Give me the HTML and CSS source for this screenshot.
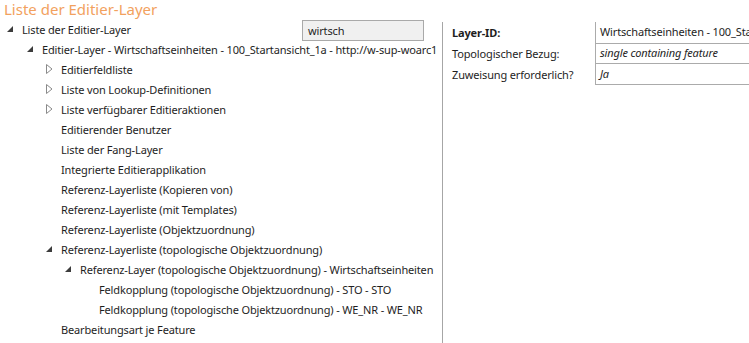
FILE: index.html
```html
<!DOCTYPE html>
<html lang="de">
<head>
    <meta charset="UTF-8">
    <title>Liste der Editier-Layer</title>
    <link rel="stylesheet" href="styles.css">
</head>
<body>
    <h1 class="title">Liste der Editier-Layer</h1>
    <div class="main">
        <div class="tree-panel">
            <div class="row lvl0 first-row">
                <span class="toggle"><svg width="6" height="6" viewBox="0 0 6 6"><polygon points="6,0 6,6 0,6" fill="#3c3c3c"/></svg></span>
                <span class="label">Liste der Editier-Layer</span>
                <div class="search">wirtsch</div>
            </div>
            <div class="row lvl1">
                <span class="toggle"><svg width="6" height="6" viewBox="0 0 6 6"><polygon points="6,0 6,6 0,6" fill="#3c3c3c"/></svg></span>
                <span class="label">Editier-Layer - Wirtschaftseinheiten - 100_Startansicht_1a - http://w-sup-woarc1</span>
            </div>
            <div class="row lvl2">
                <span class="toggle"><svg width="7" height="10" viewBox="0 0 7 10"><polygon points="0.5,0.5 6,5 0.5,9.5" fill="none" stroke="#8a8a8a"/></svg></span>
                <span class="label">Editierfeldliste</span>
            </div>
            <div class="row lvl2">
                <span class="toggle"><svg width="7" height="10" viewBox="0 0 7 10"><polygon points="0.5,0.5 6,5 0.5,9.5" fill="none" stroke="#8a8a8a"/></svg></span>
                <span class="label">Liste von Lookup-Definitionen</span>
            </div>
            <div class="row lvl2">
                <span class="toggle"><svg width="7" height="10" viewBox="0 0 7 10"><polygon points="0.5,0.5 6,5 0.5,9.5" fill="none" stroke="#8a8a8a"/></svg></span>
                <span class="label">Liste verfügbarer Editieraktionen</span>
            </div>
            <div class="row lvl2"><span class="toggle"></span><span class="label">Editierender Benutzer</span></div>
            <div class="row lvl2"><span class="toggle"></span><span class="label">Liste der Fang-Layer</span></div>
            <div class="row lvl2"><span class="toggle"></span><span class="label">Integrierte Editierapplikation</span></div>
            <div class="row lvl2"><span class="toggle"></span><span class="label">Referenz-Layerliste (Kopieren von)</span></div>
            <div class="row lvl2"><span class="toggle"></span><span class="label">Referenz-Layerliste (mit Templates)</span></div>
            <div class="row lvl2"><span class="toggle"></span><span class="label">Referenz-Layerliste (Objektzuordnung)</span></div>
            <div class="row lvl2">
                <span class="toggle"><svg width="6" height="6" viewBox="0 0 6 6"><polygon points="6,0 6,6 0,6" fill="#3c3c3c"/></svg></span>
                <span class="label">Referenz-Layerliste (topologische Objektzuordnung)</span>
            </div>
            <div class="row lvl3">
                <span class="toggle"><svg width="6" height="6" viewBox="0 0 6 6"><polygon points="6,0 6,6 0,6" fill="#3c3c3c"/></svg></span>
                <span class="label">Referenz-Layer (topologische Objektzuordnung) - Wirtschaftseinheiten</span>
            </div>
            <div class="row lvl4"><span class="toggle"></span><span class="label">Feldkopplung (topologische Objektzuordnung) - STO - STO</span></div>
            <div class="row lvl4"><span class="toggle"></span><span class="label">Feldkopplung (topologische Objektzuordnung) - WE_NR - WE_NR</span></div>
            <div class="row lvl2"><span class="toggle"></span><span class="label">Bearbeitungsart je Feature</span></div>
        </div>
        <div class="detail-panel">
            <div class="prop-label bold">Layer-ID:</div>
            <div class="prop-value">Wirtschaftseinheiten - 100_Startansicht_1a</div>
            <div class="prop-label">Topologischer Bezug:</div>
            <div class="prop-value italic">single containing feature</div>
            <div class="prop-label">Zuweisung erforderlich?</div>
            <div class="prop-value italic">Ja</div>
        </div>
    </div>
</body>
</html>
```

FILE: styles.css
```css
body {
    margin: 0;
    padding: 0;
    background-color: #ffffff;
    font-family: "Noto Sans", "Open Sans", sans-serif;
    font-size: 11px;
    letter-spacing: -0.15px;
    color: #1e1e1e;
    overflow: hidden;
}

.title {
    margin: 0;
    padding-left: 4px;
    height: 20px;
    line-height: 18px;
    font-size: 15px;
    font-weight: normal;
    letter-spacing: 0;
    color: #f2a15e;
    white-space: nowrap;
}

.main {
    display: flex;
    height: 323px;
}

.tree-panel {
    width: 442px;
    flex-shrink: 0;
    margin-top: -1px;
    box-sizing: border-box;
    padding-right: 18px;
}

.row {
    display: flex;
    align-items: center;
    height: 20px;
    white-space: nowrap;
}

.lvl0 { padding-left: 7px; }
.lvl1 { padding-left: 27px; }
.lvl2 { padding-left: 46px; }
.lvl3 { padding-left: 65px; }
.lvl4 { padding-left: 84px; }

.toggle {
    width: 15px;
    flex-shrink: 0;
    display: flex;
    align-items: center;
}

.first-row .label {
    flex: 1;
}

.search {
    width: 115px;
    height: 19px;
    line-height: 19px;
    margin-top: 2px;
    padding-left: 5px;
    background-color: #f0f0f0;
    border: 1px solid #a9a9a9;
}

.detail-panel {
    flex: 1;
    min-width: 0;
    margin-top: 2px;
    border-left: 1px solid #a6a6a6;
    padding-left: 9px;
    display: grid;
    grid-template-columns: 143px minmax(0, 1fr);
    grid-auto-rows: 21px;
    align-content: start;
    white-space: nowrap;
    overflow: hidden;
}

.prop-label {
    line-height: 21px;
}

.prop-value {
    line-height: 20px;
    padding-left: 4px;
    border: 1px solid #ababab;
    border-top: none;
    border-right: none;
    overflow: hidden;
}

.prop-value:nth-child(2) {
    border-top: 1px solid #ababab;
    margin-top: -1px;
    height: 21px;
}

.bold {
    font-weight: bold;
}

.italic {
    font-style: italic;
}
```
